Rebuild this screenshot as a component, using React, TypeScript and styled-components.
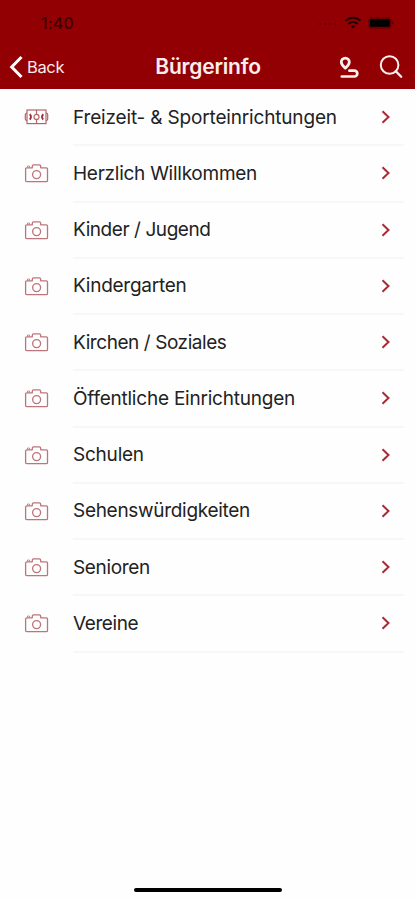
import React from "react";
import styled, { createGlobalStyle } from "styled-components";

const GlobalStyle = createGlobalStyle`
  * { box-sizing: border-box; }
  body { margin: 0; background: #fefefe; }
`;

const Screen = styled.div`
  display: flex;
  flex-direction: column;
  width: 415px;
  height: 900px;
  background: #fefefe;
  font-family: Inter, "Liberation Sans", sans-serif;
  overflow: hidden;
`;

const Header = styled.header`
  flex: none;
  height: 88.5px;
  background: #920004;
`;

const StatusBar = styled.div`
  display: flex;
  align-items: center;
  justify-content: space-between;
  height: 46px;
  padding: 0 21px 0 41px;
`;

const Clock = styled.span`
  font-size: 15.5px;
  font-weight: 500;
  letter-spacing: 0.4px;
  line-height: 20px;
  padding-top: 1px;
  color: #3a0002;
`;

const StatusIcons = styled.div`
  display: flex;
  align-items: center;
  gap: 6px;
`;

const NavBar = styled.nav`
  display: grid;
  grid-template-columns: 1fr auto 1fr;
  align-items: center;
  height: 42px;
  padding: 0 12px;
  color: #fff;
`;

const BackButton = styled.button`
  display: flex;
  align-items: center;
  gap: 4px;
  margin-left: -3px;
  padding: 0 0 1px;
  border: 0;
  background: none;
  color: #fbeaea;
  font: 400 16.5px/22px Inter, sans-serif;
  letter-spacing: -0.35px;
`;

const Title = styled.h1`
  margin: 0;
  font-size: 21px;
  font-weight: 600;
  line-height: 28px;
  letter-spacing: -0.2px;
  padding-left: 1px;
  color: #fdeeee;
`;

const Actions = styled.div`
  display: flex;
  justify-content: flex-end;
  align-items: center;
  gap: 20px;
`;

const List = styled.ul`
  flex: 1;
  margin: 0;
  padding: 1.5px 0 0;
  list-style: none;
`;

const Row = styled.li`
  display: flex;
  height: 56.25px;
`;

const IconCell = styled.div`
  display: flex;
  align-items: center;
  width: 73px;
  padding: 0 0 2px 24px;
`;

const RowBody = styled.div`
  display: flex;
  flex: 1;
  align-items: center;
  justify-content: space-between;
  margin-right: 11px;
  padding-right: 13px;
  border-bottom: 2px solid #f7f7f7;
`;

const Label = styled.span<{ $spacing: number }>`
  padding-top: 1px;
  font-size: 19px;
  line-height: 26px;
  letter-spacing: ${(p) => p.$spacing}px;
  color: #222;
  white-space: nowrap;
`;

const Footer = styled.footer`
  display: flex;
  justify-content: center;
  height: 12.5px;
`;

const HomeIndicator = styled.div`
  width: 148px;
  height: 4.5px;
  border-radius: 3px;
  background: #000;
`;

const Signal = () => (
  <svg width="20" height="4" viewBox="0 0 20 4" fill="#650204">
    <circle cx="2" cy="3" r="1" /><circle cx="7" cy="3" r="1" />
    <circle cx="12" cy="3" r="1" /><circle cx="17" cy="3" r="1" />
  </svg>
);

const Wifi = () => (
  <svg width="18" height="14" viewBox="0 0 18 14" fill="none" stroke="#240001" strokeWidth="2">
    <path d="M1.5 4.9C5.7.7 12.3.7 16.5 4.9M4.3 8c2.7-2.6 6.7-2.6 9.4 0" />
    <path d="M6.6 10.1c1.4-1.2 3.4-1.2 4.8 0L9 12.6z" fill="#240001" stroke="none" />
  </svg>
);

const Battery = () => (
  <svg width="26" height="12" viewBox="0 0 26 12">
    <rect x=".6" y=".6" width="22.5" height="10.6" rx="2.5" fill="#710002" stroke="#680003" />
    <rect x="2" y="2" width="19.8" height="7.8" rx="1.2" fill="#000" />
    <path d="M24 4v4q1.6-.6 1.6-2T24 4z" fill="#650002" />
  </svg>
);

const BackArrow = () => (
  <svg width="14" height="24" viewBox="0 0 14 24" fill="none" stroke="#fff" strokeWidth="3">
    <path d="M12.5 2 2.7 12l9.8 10" />
  </svg>
);

const RouteIcon = () => (
  <svg width="20" height="23" viewBox="0 0 20 23" fill="none" stroke="#fff0f0" strokeLinecap="round" strokeLinejoin="round">
    <path d="M6.3 12.2C3.7 10 2.3 8.2 2.3 6.1a4 4 0 0 1 8 0c0 2.1-1.4 3.9-4 6.1z" strokeWidth="2.8" />
    <path d="M10.4 14.7h5a2.9 2.9 0 0 1 0 5.8H2.8" strokeWidth="2.7" />
  </svg>
);

const SearchIcon = () => (
  <svg width="24" height="24" viewBox="0 0 24 24" fill="none" stroke="#fff0f0" strokeWidth="2" strokeLinecap="round">
    <circle cx="10.6" cy="10" r="8.8" />
    <path d="m16.8 16.2 5.4 5.5" strokeWidth="2.3" />
  </svg>
);

const PitchIcon = () => (
  <svg width="25" height="18" viewBox="0 0 25 18" fill="none" stroke="#b4656b" strokeWidth="1.2">
    <rect x="3" y="2" width="19" height="13.6" />
    <path d="M12.5 2v4.3M12.5 11.5v4.1M3 5.2q-1.7 0-1.7 1.5v4.4q0 1.5 1.7 1.5M22 5.2q1.7 0 1.7 1.5v4.4q0 1.5-1.7 1.5" />
    <circle cx="12.5" cy="8.9" r="2.5" />
    <path d="M5.8 6.2q2.4 2.7 0 5.4M19.2 6.2q-2.4 2.7 0 5.4" stroke="#98303a" strokeWidth="1.8" />
  </svg>
);

const CameraIcon = () => (
  <svg width="25" height="20" viewBox="0 0 25 20" fill="none" stroke="#bd747a" strokeWidth="1.3">
    <path d="M8.3 4.8V3.3q0-1.5 1.5-1.5h5.4q1.5 0 1.5 1.5v1.5h5.6q1.2 0 1.2 1.2v11.5q0 1.2-1.2 1.2H2.8q-1.2 0-1.2-1.2V6q0-1.2 1.2-1.2z" strokeLinejoin="round" />
    <circle cx="12.6" cy="11.6" r="4" />
    <path d="M3.5 4.5V3h2v1.5" strokeWidth=".8" />
  </svg>
);

const Chevron = () => (
  <svg width="10" height="14" viewBox="0 0 10 14" fill="none" stroke="#a92a34" strokeWidth="2">
    <path d="m1.5 1.2 6 5.8-6 5.8" />
  </svg>
);

const items: { label: string; spacing: number; pitch?: boolean }[] = [
  { label: "Freizeit- & Sporteinrichtungen", spacing: -0.17, pitch: true },
  { label: "Herzlich Willkommen", spacing: -0.26 },
  { label: "Kinder / Jugend", spacing: -0.43 },
  { label: "Kindergarten", spacing: -0.25 },
  { label: "Kirchen / Soziales", spacing: -0.43 },
  { label: "Öffentliche Einrichtungen", spacing: -0.22 },
  { label: "Schulen", spacing: -0.22 },
  { label: "Sehenswürdigkeiten", spacing: -0.3 },
  { label: "Senioren", spacing: -0.35 },
  { label: "Vereine", spacing: -0.4 },
];

export default function App() {
  return (
    <Screen>
      <GlobalStyle />
      <Header>
        <StatusBar>
          <Clock>1:40</Clock>
          <StatusIcons>
            <Signal />
            <Wifi />
            <Battery />
          </StatusIcons>
        </StatusBar>
        <NavBar>
          <BackButton><BackArrow />Back</BackButton>
          <Title>Bürgerinfo</Title>
          <Actions><RouteIcon /><SearchIcon /></Actions>
        </NavBar>
      </Header>
      <List>
        {items.map((item) => (
          <Row key={item.label}>
            <IconCell>{item.pitch ? <PitchIcon /> : <CameraIcon />}</IconCell>
            <RowBody>
              <Label $spacing={item.spacing}>{item.label}</Label>
              <Chevron />
            </RowBody>
          </Row>
        ))}
      </List>
      <Footer><HomeIndicator /></Footer>
    </Screen>
  );
}
